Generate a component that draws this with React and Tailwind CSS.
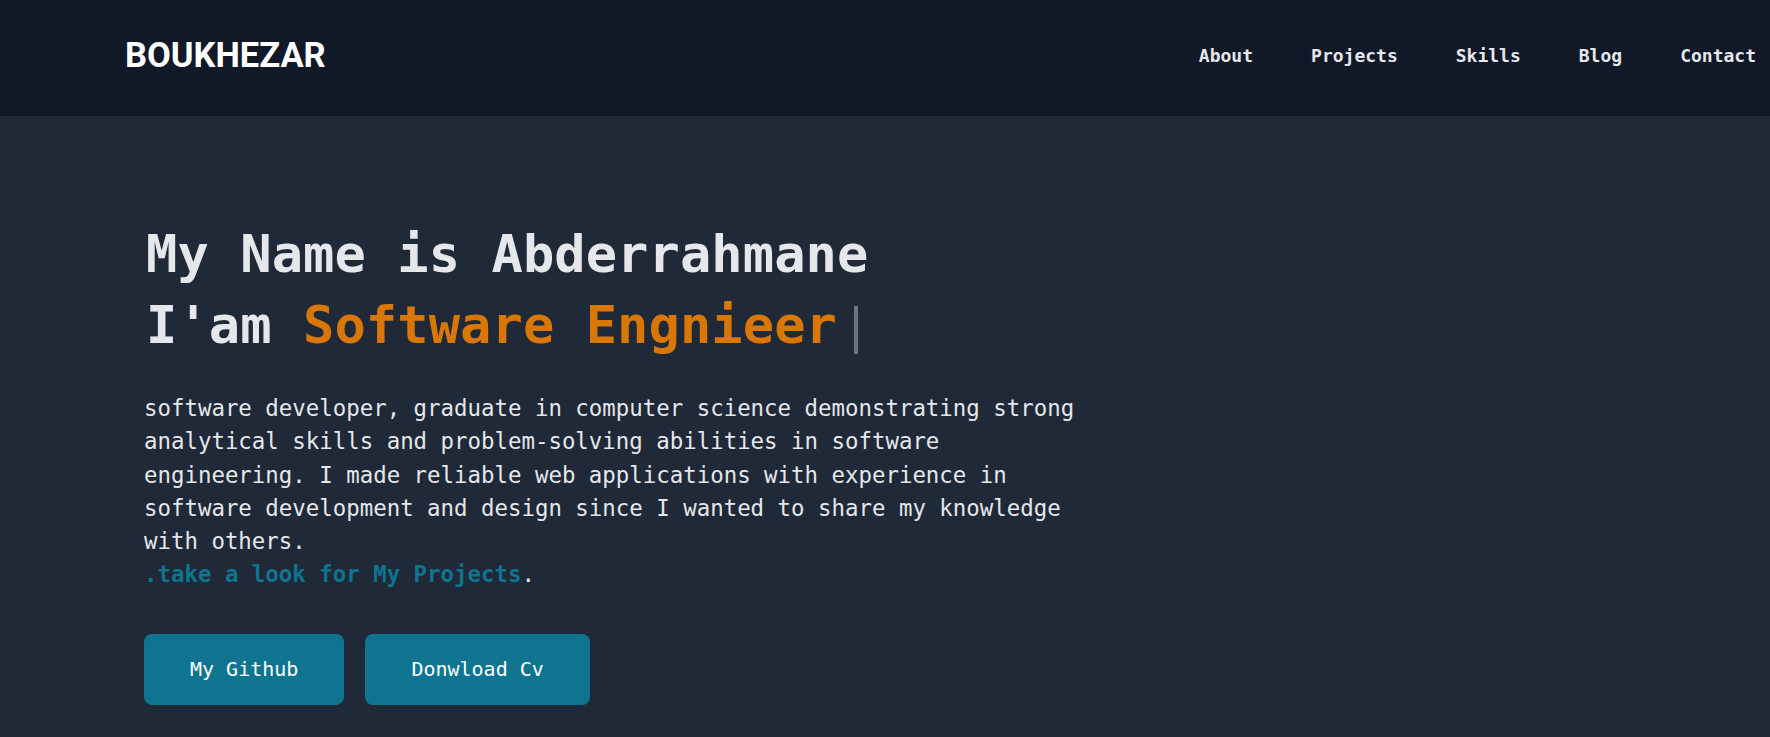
import React from "react";

const NAV = ["About", "Projects", "Skills", "Blog", "Contact"];

const mono = "font-['DejaVu_Sans_Mono',monospace]";

export default function App() {
  return (
    <div className="min-h-screen flex flex-col bg-[#1f2937]">
      <header className="h-[116px] shrink-0 bg-[#111827] flex items-center justify-between pl-[125px] pr-[14px] pb-[5px]">
        <a href="#" className="font-['Roboto',sans-serif] font-bold text-[34.5px] text-white">
          BOUKHEZAR
        </a>
        <nav className={`flex items-center gap-[58px] ${mono} font-bold text-[18px] text-[#e5e7eb]`}>
          {NAV.map((item) => (
            <a key={item} href="#">
              {item}
            </a>
          ))}
        </nav>
      </header>

      <main className={`flex-1 pl-[144px] pt-[103px] ${mono}`}>
        <h1 className="pl-[2px] font-bold text-[52px] leading-[71px] text-[#e5e7eb] tracking-[0.1px]">
          My Name is Abderrahmane
          <br />
          I'am <span className="text-[#d97706]">Software Engnieer</span>
          <span className="inline-block w-[4px] h-[48px] bg-[#6b7280] ml-[17px] align-[-11px]" />
        </h1>

        <p className="mt-[31px] w-[950px] text-[22.4px] leading-[33.3px] text-[#e5e7eb]">
          software developer, graduate in computer science demonstrating strong analytical skills and
          problem-solving abilities in software engineering. I made reliable web applications with
          experience in software development and design since I wanted to share my knowledge with
          others.
          <br />
          <a href="#" className="font-bold text-[#0e7490]">
            .take a look for My Projects
          </a>
          .
        </p>

        <div className="mt-[42px] flex gap-[21px]">
          <button className="h-[71px] px-[46px] rounded-lg bg-[#0e7490] text-white text-[20px]">
            My Github
          </button>
          <button className="h-[71px] px-[46px] rounded-lg bg-[#0e7490] text-white text-[20px]">
            Donwload Cv
          </button>
        </div>
      </main>
    </div>
  );
}
